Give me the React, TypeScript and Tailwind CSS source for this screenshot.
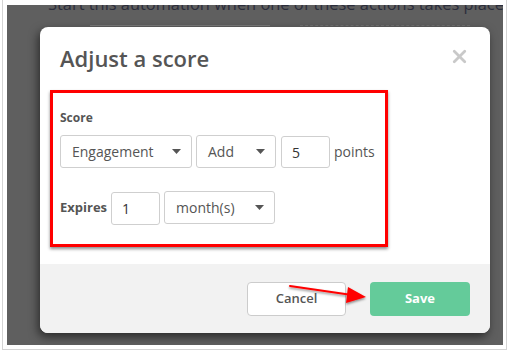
import { X } from "lucide-react";

function Caret() {
  return (
    <svg width="9" height="5" viewBox="0 0 9 5" className="shrink-0">
      <path d="M0 0h9L4.5 5z" fill="#555" />
    </svg>
  );
}

function Select({ label, className }: { label: string; className: string }) {
  return (
    <div
      className={`flex items-center justify-between rounded-[3px] border border-[#cfcfcf] bg-white pl-[11px] pr-[10px] text-[14px] text-[#555] ${className}`}
    >
      <span>{label}</span>
      <Caret />
    </div>
  );
}

function NumberBox({ value, className }: { value: string; className: string }) {
  return (
    <div
      className={`flex items-center rounded-[3px] border border-[#cfcfcf] bg-white pl-[10px] text-[14px] text-[#333] ${className}`}
    >
      {value}
    </div>
  );
}

export default function App() {
  return (
    <div className="h-[354px] w-[512px] overflow-hidden bg-white font-['Open_Sans',sans-serif]">
      {/* screenshot frame */}
      <div className="ml-[2px] -mt-px h-[351px] w-[505px] border border-[#d4d4d4] pb-[5px] pl-[4px] pr-[2px] pt-[5px]">
        <div className="relative h-[340px] w-[496px] overflow-hidden bg-[#5f5f5f]">
          {/* page behind the overlay */}
          <p className="absolute left-[41px] top-[-12px] whitespace-nowrap text-[16.4px] leading-[22px] text-[#2c2e3c]">
            Start this automation when one of these actions takes place
          </p>
          <div className="absolute left-[83px] top-[20px] h-px w-[180px] bg-[#7a7a7a]" />
          <div className="absolute left-[293px] top-[20px] w-[170px] border-t border-dashed border-[#707070]" />

          {/* modal */}
          <div className="absolute left-[33px] top-[22px] flex h-[306px] w-[450px] flex-col overflow-hidden rounded-[8px] bg-white shadow-[-2px_4px_10px_rgba(0,0,0,0.55)]">
            <div className="flex items-start justify-between pl-[20px] pr-[20px] pt-[16px]">
              <h1 className="text-[22px] font-semibold leading-[30px] text-[#555]">Adjust a score</h1>
              <X className="mt-[3px] h-[21px] w-[21px] text-[#c9c9c9]" strokeWidth={3.2} />
            </div>

            <div className="flex-1 pl-[10px] pt-[17px]">
              <div className="h-[157px] w-[338px] border-[3px] border-[#ff0000] pl-[7px] pt-[17px] shadow-[0_2px_3px_rgba(0,0,0,0.45)]">
                <div className="text-[12px] font-bold leading-[16px] text-[#555]">Score</div>
                <div className="mt-[8px] flex items-center">
                  <Select label="Engagement" className="h-[33px] w-[132px]" />
                  <Select label="Add" className="ml-[4px] h-[33px] w-[80px]" />
                  <NumberBox value="5" className="ml-[5px] mt-[2px] h-[32px] w-[49px]" />
                  <span className="ml-[4px] text-[14px] text-[#555]">points</span>
                </div>
                <div className="mt-[22px] flex items-center">
                  <span className="text-[13px] font-bold text-[#555]">Expires</span>
                  <NumberBox value="1" className="ml-[4px] mt-[2px] h-[33px] w-[49px]" />
                  <Select label="month(s)" className="ml-[4px] h-[33px] w-[111px]" />
                </div>
              </div>
            </div>

            <div className="flex h-[69px] items-center justify-end gap-[24px] bg-[#f2f2f2] pr-[20px]">
              <button className="h-[34px] w-[99px] rounded-[4px] border border-[#cccccc] bg-white text-[13px] font-semibold text-[#555]">
                Cancel
              </button>
              <button className="h-[34px] w-[100px] rounded-[4px] bg-[#64cb9a] text-[13px] font-bold text-white">
                Save
              </button>
            </div>
          </div>

          {/* annotation arrow */}
          <svg
            className="absolute left-[0px] top-[0px]"
            width="496"
            height="340"
            viewBox="7 5 496 340"
          >
            <defs>
              <filter id="sh" x="-20%" y="-50%" width="140%" height="200%">
                <feDropShadow dx="0" dy="1.5" stdDeviation="1.2" floodColor="#000" floodOpacity="0.45" />
              </filter>
            </defs>
            <g filter="url(#sh)">
              <line x1="290" y1="286" x2="352" y2="295" stroke="#ff0000" strokeWidth="2" strokeLinecap="round" />
              <path d="M348 287L366 297L346 303Z" fill="#ff0000" />
            </g>
          </svg>
        </div>
      </div>
    </div>
  );
}
